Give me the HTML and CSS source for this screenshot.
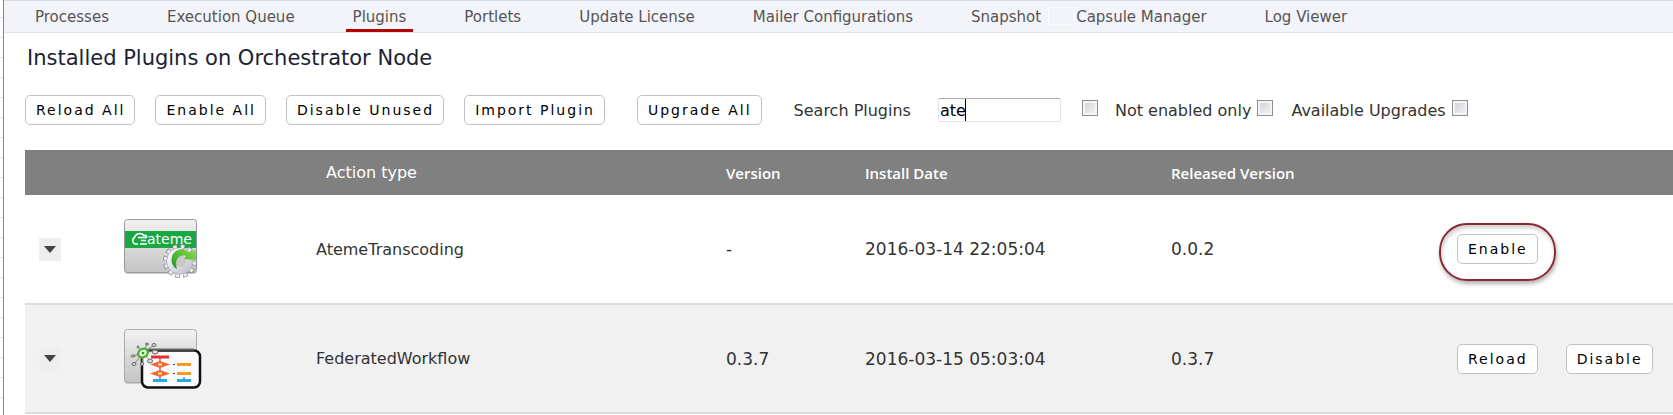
FILE: index.html
```html
<!DOCTYPE html>
<html lang="en">
<head>
    <meta charset="UTF-8">
    <meta name="viewport" content="width=device-width, initial-scale=1.0">
    <title>Installed Plugins</title>
    <link rel="stylesheet" href="styles.css">
</head>
<body>
    <div class="page">
        <nav class="tabs">
            <a href="#">Processes</a>
            <a href="#">Execution Queue</a>
            <a href="#" class="active">Plugins</a>
            <a href="#">Portlets</a>
            <a href="#">Update License</a>
            <a href="#">Mailer Configurations</a>
            <a href="#" class="snapshot">Snapshot</a>
            <span class="slot"></span>
            <a href="#">Capsule Manager</a>
            <a href="#">Log Viewer</a>
        </nav>

        <main class="content">
            <h1>Installed Plugins on Orchestrator Node</h1>

            <form class="toolbar">
                <div class="actions">
                    <button type="button">Reload All</button>
                    <button type="button">Enable All</button>
                    <button type="button">Disable Unused</button>
                    <button type="button">Import Plugin</button>
                </div>
                <button type="button">Upgrade All</button>
                <label class="search" for="search">Search Plugins</label>
                <input type="text" id="search" value="ate">
                <input type="checkbox" class="search-toggle" aria-label="Use search">
                <label class="check">Not enabled only <input type="checkbox"></label>
                <label class="check">Available Upgrades <input type="checkbox"></label>
            </form>

            <table>
                <colgroup>
                    <col class="col-toggle">
                    <col class="col-icon">
                    <col class="col-type">
                    <col class="col-version">
                    <col class="col-date">
                    <col class="col-released">
                    <col>
                </colgroup>
                <thead>
                    <tr>
                        <th></th>
                        <th></th>
                        <th class="type">Action type</th>
                        <th>Version</th>
                        <th>Install Date</th>
                        <th>Released Version</th>
                        <th></th>
                    </tr>
                </thead>
                <tbody>
                    <tr>
                        <td><button type="button" class="toggle" aria-label="Expand"></button></td>
                        <td class="icon">
                            <svg width="80" height="60" viewBox="0 0 80 60">
                                <defs>
                                    <linearGradient id="plate" x1="0" y1="0" x2="0" y2="1">
                                        <stop offset="0" stop-color="#f2f2f2"/>
                                        <stop offset="0.5" stop-color="#dadada"/>
                                        <stop offset="1" stop-color="#c4c4c4"/>
                                    </linearGradient>
                                    <linearGradient id="leaf" x1="0" y1="1" x2="1" y2="0">
                                        <stop offset="0" stop-color="#1c9a1c"/>
                                        <stop offset="1" stop-color="#8be04a"/>
                                    </linearGradient>
                                    <linearGradient id="steel" x1="0" y1="0" x2="1" y2="1">
                                        <stop offset="0" stop-color="#f8f8fc"/>
                                        <stop offset="1" stop-color="#c4c4d0"/>
                                    </linearGradient>
                                </defs>
                                <rect x="0.5" y="2" width="72" height="53" rx="3" fill="#ccc"/>
                                <rect x="0.5" y="0.5" width="72" height="53" rx="3" fill="url(#plate)" stroke="#999"/>
                                <rect x="1" y="12" width="71" height="17" fill="#18a843"/>
                                <path d="M14 25H11.500A3.500 3.500 0 0 1 10.500 18.500C11.500 14.500 17 13 20 16.500C21.500 15.500 23 17 22.500 18.500M14 18.500H23M17 21.500H22M16 25H23" fill="none" stroke="#fff" stroke-width="1.500"/>
                                <text class="logo" x="23" y="25">ateme</text>
                                <circle cx="56" cy="42" r="14" fill="none" stroke="#85858f" stroke-width="6" stroke-dasharray="4.200 3.130"/>
                                <circle cx="56" cy="42" r="14" fill="none" stroke="#ececf4" stroke-width="4.500" stroke-dasharray="3.200 4.130" stroke-dashoffset="-0.500"/>
                                <circle cx="56" cy="42" r="13" fill="none" stroke="#85858f" stroke-width="1"/>
                                <circle cx="56" cy="42" r="9.500" fill="none" stroke="url(#steel)" stroke-width="7"/>
                                <circle cx="56" cy="42" r="6" fill="#c9c9c9"/>
                                <path d="M53 50C44 46 46 30 59 30L65 33L72 31V41L60 40L62 37C55 35 50 41 53 50Z" fill="url(#leaf)"/>
                            </svg>
                        </td>
                        <td>AtemeTranscoding</td>
                        <td class="number">-</td>
                        <td class="number">2016-03-14 22:05:04</td>
                        <td class="number">0.0.2</td>
                        <td>
                            <div class="row-actions">
                                <span class="marked"><button type="button">Enable</button></span>
                            </div>
                        </td>
                    </tr>
                    <tr>
                        <td><button type="button" class="toggle" aria-label="Expand"></button></td>
                        <td class="icon">
                            <svg width="80" height="60" viewBox="0 0 80 60">
                                <rect x="0.5" y="2" width="72" height="53" rx="3" fill="#ccc"/>
                                <rect x="0.5" y="0.5" width="72" height="53" rx="3" fill="url(#plate)" stroke="#aaa"/>
                                <rect x="18" y="21.500" width="58" height="37" rx="6" fill="#fafaff" stroke="#111" stroke-width="2.500"/>
                                <path d="M24 20.500H70" stroke="#666" stroke-width="2"/>
                                <g stroke="#888" stroke-width="1">
                                    <path d="M19 24L9 27M19 24L11 34M19 24L14 18M19 24L23 15M19 24L30 16M19 24L31 22M19 24L26 32M19 24L18 35"/>
                                </g>
                                <g fill="#ddd" stroke="#666" stroke-width="1">
                                    <ellipse cx="9" cy="27" rx="2" ry="1"/>
                                    <ellipse cx="10" cy="35" rx="2" ry="1.500"/>
                                    <ellipse cx="14" cy="18" rx="1" ry="1"/>
                                    <ellipse cx="23" cy="15" rx="1.500" ry="1"/>
                                    <ellipse cx="30" cy="16" rx="2" ry="1.500"/>
                                    <ellipse cx="31" cy="23" rx="3" ry="2"/>
                                    <ellipse cx="26" cy="32" rx="2.500" ry="2"/>
                                    <ellipse cx="18" cy="35" rx="1.500" ry="1.500"/>
                                </g>
                                <ellipse cx="19" cy="24" rx="5" ry="4" transform="rotate(-30 19 24)" fill="#fff" stroke="#4bb52c" stroke-width="2.500"/>
                                <circle cx="19" cy="24" r="1.500" fill="#3a9a20"/>
                                <path d="M36 29V51M49 35.500H51M49 44.500H51M60 48V51" stroke="#444" stroke-width="1"/>
                                <rect x="27" y="26.500" width="18" height="3" fill="#ee2a2a"/>
                                <path d="M36 32L46 35.500L36 39L26 35.500ZM36 41L46 44.500L36 48L26 44.500Z" fill="#f4692a"/>
                                <path d="M34 35.500H38M34 44.500H38" stroke="#ffd9c4" stroke-width="2"/>
                                <rect x="53" y="34" width="14" height="3" fill="#f79a1e"/>
                                <rect x="53" y="43" width="14" height="3" fill="#f79a1e"/>
                                <rect x="29" y="50" width="14" height="3" fill="#22abe2"/>
                                <rect x="53" y="50" width="14" height="3" fill="#22abe2"/>
                            </svg>
                        </td>
                        <td>FederatedWorkflow</td>
                        <td class="number">0.3.7</td>
                        <td class="number">2016-03-15 05:03:04</td>
                        <td class="number">0.3.7</td>
                        <td>
                            <div class="row-actions">
                                <button type="button">Reload</button>
                                <button type="button">Disable</button>
                            </div>
                        </td>
                    </tr>
                </tbody>
            </table>
        </main>
    </div>
</body>
</html>
```
FILE: styles.css
```css
:root {
    --text-color: #333;
    --tab-color: #555;
    --line-color: #dcdcdc;
    --accent-color: #b30000;
}

* {
    box-sizing: border-box;
}

body {
    margin: 0;
    padding-left: 3px;
    font-family: "DejaVu Sans", Verdana, sans-serif;
    font-size: 16px;
    color: var(--text-color);
    background: repeating-linear-gradient(#fff 0 17px, #e4e4e4 17px 18px, #fff 18px 20px);
}

.page {
    min-height: 100vh;
    border-left: 1px solid #85858d;
    background-color: #fff;
}

.tabs {
    display: flex;
    align-items: stretch;
    gap: 44px;
    height: 33px;
    padding-left: 24px;
    border-top: 1px solid #d9dae6;
    border-bottom: 1px solid #e2e3e8;
    background-color: #f3f4f9;
    white-space: nowrap;
}

.tabs a {
    padding: 0 7px;
    font-size: 15px;
    line-height: 32px;
    color: var(--tab-color);
    text-decoration: none;
}

.tabs .active {
    border-bottom: 3px solid var(--accent-color);
}

.tabs .snapshot {
    margin-right: -44px;
}

.slot {
    width: 27px;
    height: 18px;
    margin: 6px -50px 0 0;
    border: 1px solid #fafbfd;
}

.content {
    padding-left: 21px;
}

h1 {
    margin: 0;
    padding: 10px 2px 0;
    font-size: 21px;
    font-weight: normal;
    line-height: 30px;
    color: #1c2233;
}

.toolbar {
    display: flex;
    align-items: center;
    margin: 22px 0 25px;
    white-space: nowrap;
}

.actions {
    display: flex;
    gap: 20px;
    margin-right: 32px;
}

button {
    height: 30px;
    padding: 0 9px 0 10px;
    border: 1px solid #c2c2c2;
    border-radius: 5px;
    background-color: #fff;
    color: #000;
    font-family: inherit;
    font-size: 14px;
    letter-spacing: 2px;
}

.search {
    margin: 0 27px 0 32px;
}

input[type="text"] {
    width: 123px;
    height: 24px;
    padding: 0 1px;
    border: 1px solid #e0e2ea;
    border-top-color: #abadb3;
    border-radius: 2px;
    background: linear-gradient(#000, #000) 26px 0 / 1px 100% no-repeat #fff;
    font-family: inherit;
    font-size: 16px;
    color: #000;
}

input[type="checkbox"] {
    appearance: none;
    width: 16px;
    height: 16px;
    margin: 0 0 4px;
    border: 1px solid #8e8f8f;
    background: linear-gradient(135deg, #cbcfd5, #f6f6f6);
    box-shadow: inset 0 0 0 2px #f4f4f4;
}

input.search-toggle {
    margin-left: 21px;
    margin-right: 17px;
}

.check {
    display: flex;
    align-items: center;
    gap: 6px;
    margin-right: 18px;
}

table {
    width: 100%;
    table-layout: fixed;
    border-collapse: collapse;
}

.col-toggle {
    width: 75px;
}

.col-icon {
    width: 216px;
}

.col-type {
    width: 410px;
}

.col-version {
    width: 139px;
}

.col-date {
    width: 306px;
}

.col-released {
    width: 286px;
}

th {
    height: 45px;
    padding: 0;
    background-color: #808080;
    color: #fff;
    font-family: "Open Sans", sans-serif;
    font-size: 15px;
    font-weight: 600;
    text-align: left;
}

th.type {
    padding-left: 10px;
    font-family: inherit;
    font-size: 16px;
    font-weight: normal;
}

td {
    height: 109px;
    padding: 0;
    border-bottom: 2px solid var(--line-color);
}

td.number {
    font-size: 17px;
}

tbody tr:nth-child(even) {
    background-color: #f1f1f1;
}

.toggle {
    display: block;
    width: 22px;
    height: 23px;
    margin-left: 14px;
    padding: 0 5px;
    border: none;
    border-radius: 0;
    background-color: #eee;
}

.toggle::before {
    content: "";
    display: block;
    border: 6px solid transparent;
    border-top: 7px solid #444;
    border-bottom: none;
}

.icon svg {
    display: block;
    margin-left: 24px;
}

.logo {
    fill: #fff;
    font-family: "DejaVu Sans", sans-serif;
    font-size: 14px;
}

.row-actions {
    display: flex;
    gap: 28px;
}

.marked {
    position: relative;
}

/* highlight ring round the button */
.marked::after {
    content: "";
    position: absolute;
    inset: -11px -18px -17px;
    border: 2px solid #8c2630;
    border-radius: 28px;
    box-shadow: 1px 3px 4px rgba(0, 0, 0, 0.3), inset 1px 3px 4px rgba(0, 0, 0, 0.2);
    pointer-events: none;
}
```
